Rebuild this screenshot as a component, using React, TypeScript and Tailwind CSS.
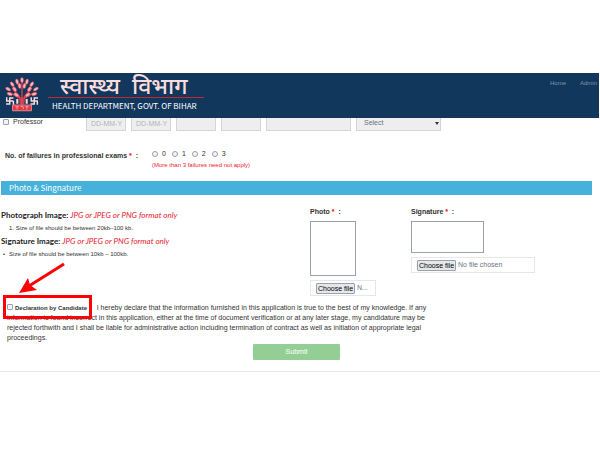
import type { ReactNode } from "react";

const failureCounts = ["0", "1", "2", "3"];

const leaves = [
  [22, 5, 0],
  [16, 7, -15],
  [28, 7, 15],
  [10, 10, -35],
  [34, 10, 35],
  [19, 12, -10],
  [25, 12, 10],
  [5, 16, -60],
  [39, 16, 60],
  [13, 16, -35],
  [31, 16, 35],
  [7, 22, -75],
  [37, 22, 75],
  [15, 23, -55],
  [29, 23, 55],
];

function Emblem() {
  return (
    <svg viewBox="0 0 44 44" className="h-9 w-9 shrink-0" aria-label="Emblem">
      <path
        d="M20 34l-1-9-9-10M24 34l1-9 9-10M22 34V8M19 27l-11-6M25 27l11-6"
        fill="none"
        stroke="#e0404a"
        strokeWidth="1.6"
      />
      {leaves.map(([x, y, angle]) => (
        <ellipse
          key={`${x}-${y}`}
          cx={x}
          cy={y}
          rx="1.8"
          ry="3.3"
          fill="#f6b3b9"
          stroke="#e0404a"
          strokeWidth=".6"
          transform={`rotate(${angle} ${x} ${y})`}
        />
      ))}
      <g fill="none" stroke="#fbdadd" strokeWidth="1.8">
        <path d="M7 26v9M2.5 30.5h9M7 26.8h4.5M11.5 30.5v4.5M7 34.2H2.5M3.3 30.5V26" />
        <path d="M37 26v9M32.5 30.5h9M37 26.8h4.5M40.7 30.5v4.5M37 34.2h-4.5M33.3 30.5V26" />
      </g>
      <path d="M15 34v-6h2.5v6zM26.5 34v-6H29v6z" fill="#fbdadd" />
      <path d="M20 35v-9h4v9z" fill="#e0404a" />
      <path d="M10.5 35.5h23v7h-23z" fill="#e8343e" stroke="#f59aa0" />
      <path
        d="M14 37.5h4M16 37.5v3.5M20.5 37.5h3v3M26 37.5h4M28 37.5v3.5"
        stroke="#f7b3b7"
        fill="none"
      />
    </svg>
  );
}

function Label({ htmlFor, children }: { htmlFor?: string; children: ReactNode }) {
  return (
    <label htmlFor={htmlFor} className="block text-[7px] leading-[10px] font-bold">
      {children} <span className="text-red-600">*</span>&nbsp; :
    </label>
  );
}

function FilePicker({ id, status }: { id: string; status: string }) {
  return (
    <label
      htmlFor={id}
      className="flex h-4 items-center gap-0.5 border border-gray-200 pl-[5px] text-[7px] leading-[10px] text-gray-500"
    >
      <input id={id} type="file" className="sr-only" />
      <span className="shrink-0 rounded-[1px] border border-gray-400 bg-gray-200 px-px leading-[9px] text-black">
        Choose file
      </span>
      {status}
    </label>
  );
}

function FormatNote({ title }: { title: string }) {
  return (
    <h3 className="font-['Lato',sans-serif] text-[8px] leading-[12px] font-bold text-[#222222]">
      {title}: <em className="font-normal text-[#e8212b]">JPG or JPEG or PNG format only</em>
    </h3>
  );
}

const fieldStyle =
  "h-[13px] min-w-0 border border-t-0 border-gray-300 bg-[#eeeeee] pb-0.5 text-[7px] text-gray-500";

export default function App() {
  return (
    <div className="bg-white pt-[73px] font-['Liberation_Sans',Arial,sans-serif] text-[#333333]">
      <header className="mr-px flex h-[45px] items-start bg-[#11375d] pl-1">
        <div className="pt-[3px]">
          <Emblem />
        </div>
        <div className="ml-2 w-[156px] text-white">
          <p className="flex h-6 gap-3 pl-3 font-['Noto_Sans_Devanagari','Noto_Sans',sans-serif] text-[23px] leading-[30px] font-medium text-[#fbdcdc]">
            <span>स्वास्थ्य</span>
            <span>विभाग</span>
          </p>
          <div className="h-px bg-[#c4282f]" />
          <h1 className="pt-[3px] pl-1 font-['Noto_Sans_CJK_SC',sans-serif] text-[8px] leading-[10px] font-normal whitespace-nowrap">
            HEALTH DEPARTMENT, GOVT. OF BIHAR
          </h1>
        </div>
        <nav className="mt-[5px] mr-0.5 ml-auto flex gap-[14px] text-[6px] leading-[10px] text-[#8496a8]">
          <a href="#home">Home</a>
          <a href="#admin">Admin</a>
        </nav>
      </header>

      <form>
        <div className="grid w-[442px] grid-cols-[78px_40px_40px_40px_40px_85px_85px] gap-x-[5px] pl-[3px]">
          <label className="flex h-2 items-center gap-1 text-[7px]">
            <input
              type="checkbox"
              className="size-[6px] appearance-none rounded-[1px] border border-gray-400 bg-gray-100"
            />
            Professor
          </label>
          <input aria-label="From" placeholder="DD-MM-Y" className={`${fieldStyle} pl-1`} />
          <input aria-label="To" placeholder="DD-MM-Y" className={`${fieldStyle} pl-1`} />
          <input aria-label="Years" className={fieldStyle} />
          <input aria-label="Months" className={fieldStyle} />
          <input aria-label="Institution" className={fieldStyle} />
          <div className="relative flex">
            <select aria-label="Type" className={`${fieldStyle} w-full appearance-none pl-[7px]`}>
              <option>Select</option>
            </select>
            <svg viewBox="0 0 4 3" className="absolute top-1 right-[2px] h-[3px] w-1">
              <path d="M0 0h4L2 3z" fill="#333333" />
            </svg>
          </div>
        </div>

        <fieldset className="mt-[18px] flex pl-[5px]">
          <div className="w-[147px] pt-0.5">
            <Label>No. of failures in professional exams</Label>
          </div>
          <div>
            <div className="flex gap-[6px]">
              {failureCounts.map((count) => (
                <label key={count} className="flex items-center gap-1 text-[7px] leading-[10px]">
                  <input
                    type="radio"
                    name="failures"
                    className="size-[6px] appearance-none rounded-full border border-gray-400 bg-gray-100"
                  />
                  {count}
                </label>
              ))}
            </div>
            <p className="text-[6px] leading-[12px] text-[#f0202c]">
              (More than 3 failures need not apply)
            </p>
          </div>
        </fieldset>

        <h2 className="mt-[10px] mr-2 ml-px bg-[#46b1da] pl-2 font-['Noto_Sans_CJK_SC',sans-serif] text-[8px] leading-[14px] text-white">
          Photo &amp; Singnature
        </h2>

        <div className="flex h-[100px] items-start pt-3 pl-px">
          <div className="w-[309px] pt-[2px]">
            <FormatNote title="Photograph Image" />
            <ol className="list-decimal pl-2 text-[6px] leading-[14px]">
              <li className="list-inside">Size of file should be between 20kb–100 kb.</li>
            </ol>
            <FormatNote title="Signature Image" />
            <ul className="pl-0.5 text-[6px] leading-[14px]">
              <li className="flex gap-1 before:content-['•']">
                Size of file should be between 10kb – 100kb.
              </li>
            </ul>
          </div>
          <div className="w-[101px]">
            <Label htmlFor="photo">Photo</Label>
            <div className="mt-1 mb-1 h-[55px] w-[46px] border border-gray-400" />
            <div className="w-[66px]">
              <FilePicker id="photo" status="N..." />
            </div>
          </div>
          <div>
            <Label htmlFor="signature">Signature</Label>
            <div className="mt-1 mb-1 h-8 w-[73px] border border-gray-400" />
            <div className="w-[124px]">
              <FilePicker id="signature" status="No file chosen" />
            </div>
          </div>
        </div>

        <div className="relative mt-2 w-[428px] pl-[7px]">
          <p className="text-[7px] leading-[10px]">
            <label className="mr-1 text-[6px] font-bold">
              <input
                type="checkbox"
                className="mr-0.5 size-[6px] appearance-none rounded-[1px] border border-gray-400 bg-gray-100"
              />
              Declaration by Candidate :
            </label>{" "}
            I hereby declare that the information furnished in this application is true to the best
            of my knowledge. If any information is found incorrect in this application, either at
            the time of document verification or at any later stage, my candidature may be rejected
            forthwith and I shall be liable for administrative action including termination of
            contract as well as initiation of appropriate legal proceedings.
          </p>
          <div className="absolute -top-2 left-[3px] h-6 w-[89px] border-3 border-[#fb0207]" />
          <svg viewBox="0 0 46 32" className="absolute -top-10 left-[19px] h-8 w-[46px]">
            <path d="M45 1L10 23" stroke="#fb0207" strokeWidth="3" />
            <path d="M0 30L9 15l2 7 7 5z" fill="#fb0207" />
          </svg>
        </div>

        <div className="mt-[1px] border-b border-gray-200 pb-[11px] pl-[253px]">
          <button
            type="submit"
            className="block h-4 w-[87px] rounded-[1px] bg-[#93cf94] text-[7px] text-white"
          >
            Submit
          </button>
        </div>
      </form>
    </div>
  );
}
